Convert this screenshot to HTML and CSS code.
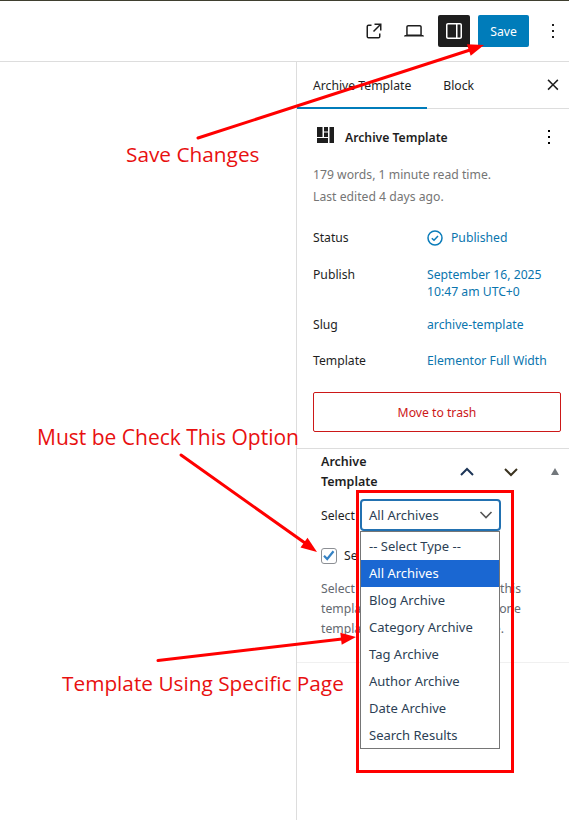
FILE: index.html
```html
<!DOCTYPE html>
<html lang="en">
<head>
    <meta charset="UTF-8">
    <title>Archive Template</title>
    <link rel="stylesheet" href="styles.css">
</head>
<body>
    <div class="page">
        <header class="topbar">
            <button class="icon-btn" aria-label="View">
                <svg width="24" height="24" viewBox="0 0 24 24"><path d="M19.500 4.500h-7V6h4.440l-5.970 5.970 1.060 1.060L18 7.060v4.440h1.500v-7Zm-13 1a2 2 0 0 0-2 2v10a2 2 0 0 0 2 2h10a2 2 0 0 0 2-2v-3H17v3a.5.5 0 0 1-.5.5h-10a.5.5 0 0 1-.5-.5v-10a.5.5 0 0 1 .5-.5h3V5.500h-3Z"/></svg>
            </button>
            <button class="icon-btn" aria-label="Preview">
                <svg width="24" height="24" viewBox="0 0 24 24"><path d="M20.500 16h-.7V8c0-1.100-.9-2-2-2H6.200c-1.100 0-2 .9-2 2v8h-.7c-.8 0-1.500.7-1.500 1.500h20c0-.8-.7-1.500-1.500-1.500ZM5.700 8c0-.3.2-.5.500-.5h11.600c.3 0 .5.2.5.5v7.600H5.700V8Z"/></svg>
            </button>
            <button class="icon-btn is-active" aria-label="Settings">
                <svg width="24" height="24" viewBox="0 0 24 24"><path fill="#fff" d="M18 4H6c-1.100 0-2 .9-2 2v12c0 1.100.9 2 2 2h12c1.100 0 2-.9 2-2V6c0-1.100-.9-2-2-2Zm-4 14.500H6c-.3 0-.5-.2-.5-.5V6c0-.3.2-.5.5-.5h8v13Zm4.500-.5c0 .3-.2.5-.5.5h-2.500v-13H18c.3 0 .5.2.5.5v12Z"/></svg>
            </button>
            <button class="save-btn">Save</button>
            <button class="icon-btn" aria-label="Options">
                <svg width="24" height="24" viewBox="0 0 24 24"><path d="M13 19h-2v-2h2v2Zm0-6h-2v-2h2v2Zm0-6h-2V5h2v2Z"/></svg>
            </button>
        </header>

        <div class="main">
            <div class="canvas"></div>
            <aside class="sidebar">
                <div class="tabs">
                    <span class="tab active">Archive Template</span>
                    <span class="tab">Block</span>
                    <svg class="tab-close" width="24" height="24" viewBox="0 0 24 24"><path d="m13 11.800 4.400-4.400-1.100-1.100-4.300 4.400-4.400-4.400-1.100 1.100 4.400 4.400-4.400 4.300 1.100 1.100 4.400-4.400 4.300 4.400 1.100-1.100z"/></svg>
                </div>

                <section class="summary">
                    <div class="summary-head">
                        <svg class="tpl-icon" width="17" height="16" viewBox="0 0 17 16"><path fill="#1e1e1e" d="M0 0h5.500v10H0zM7 0h4v4.500H7zM7 5.500h4V10H7zM0 11h11v5H0zM12.500 0H17v16h-4.500z"/></svg>
                        <h2>Archive Template</h2>
                        <svg class="dots" width="24" height="24" viewBox="0 0 24 24"><path d="M13 19h-2v-2h2v2Zm0-6h-2v-2h2v2Zm0-6h-2V5h2v2Z"/></svg>
                    </div>
                    <p class="meta">179 words, 1 minute read time.</p>
                    <p class="meta">Last edited 4 days ago.</p>

                    <div class="rows">
                        <div class="row row-status">
                            <span class="row-label">Status</span>
                            <span class="row-value status-value">
                                <svg width="16" height="16" viewBox="0 0 16 16"><circle cx="8" cy="8" r="7" fill="none" stroke="#0a7cba" stroke-width="1.500"/><path d="M4.800 8.200 7 10.300l4-4.300" fill="none" stroke="#0a7cba" stroke-width="1.500"/></svg>
                                Published
                            </span>
                        </div>
                        <div class="row row-publish">
                            <span class="row-label">Publish</span>
                            <span class="row-value">September 16, 2025<br>10:47 am UTC+0</span>
                        </div>
                        <div class="row row-slug">
                            <span class="row-label">Slug</span>
                            <span class="row-value">archive-template</span>
                        </div>
                        <div class="row row-template">
                            <span class="row-label">Template</span>
                            <span class="row-value">Elementor Full Width</span>
                        </div>
                    </div>
                    <button class="trash-btn">Move to trash</button>
                </section>

                <section class="metabox">
                    <div class="metabox-head">
                        <h3>Archive Template</h3>
                        <svg class="chev chev-up" width="16" height="10" viewBox="0 0 16 10"><path d="M2 8l6-6 6 6" fill="none" stroke="#1d3557" stroke-width="2"/></svg>
                        <svg class="chev chev-down" width="16" height="10" viewBox="0 0 16 10"><path d="M2 2l6 6 6-6" fill="none" stroke="#3b3320" stroke-width="2"/></svg>
                        <span class="tri"></span>
                    </div>
                    <div class="field">
                        <span class="field-label">Select</span>
                        <div class="select">
                            <span>All Archives</span>
                            <svg width="16" height="10" viewBox="0 0 16 10"><path d="M2.500 2 8 7.500 13.500 2" fill="none" stroke="#555" stroke-width="1.600"/></svg>
                        </div>
                    </div>
                    <label class="check-row">
                        <span class="checkbox"><svg width="16" height="16" viewBox="0 0 16 16"><path d="M3 7.800 6.200 11 12.500 3.300" fill="none" stroke="#3582c4" stroke-width="2.200"/></svg></span>
                        <span>Se</span>
                    </label>
                    <div class="help">
                        <p><span>Select</span><span>this</span></p>
                        <p><span>templa</span><span>one</span></p>
                        <p class="help-last"><span>templa</span><span>e.</span></p>
                    </div>
                </section>
            </aside>
        </div>

        <ul class="dropdown">
            <li>-- Select Type --</li>
            <li class="selected">All Archives</li>
            <li>Blog Archive</li>
            <li>Category Archive</li>
            <li>Tag Archive</li>
            <li>Author Archive</li>
            <li>Date Archive</li>
            <li>Search Results</li>
        </ul>

        <!-- annotations drawn on top of the screenshot -->
        <div class="red-box"></div>
        <svg class="arrows" width="569" height="820" viewBox="0 0 569 820">
            <g stroke="#f00" stroke-width="3" stroke-linecap="round" fill="none">
                <path d="M198 138 470 50"/>
                <path d="M181 455 305 543"/>
                <path d="M158 660.500 342 639"/>
            </g>
            <g fill="#f00">
                <path d="M484 45 470.700 55.700 466.900 44.300z"/>
                <path d="M317 552 300.500 547.600 307.500 537.800z"/>
                <path d="M356 637 341.700 644.800 340.300 632.800z"/>
            </g>
        </svg>
        <span class="note note-save">Save Changes</span>
        <span class="note note-check">Must be Check This Option</span>
        <span class="note note-page">Template Using Specific Page</span>
    </div>
</body>
</html>
```

FILE: styles.css
```css
* {
    box-sizing: border-box;
}
body {
    margin: 0;
    background: #fff;
    font-family: "Noto Sans", "Open Sans", sans-serif;
    font-size: 12.200px;
    color: #1e1e1e;
}
h2, h3, p, ul {
    margin: 0;
    padding: 0;
}
button {
    font-family: inherit;
    border: none;
    background: none;
    padding: 0;
    cursor: pointer;
}
.page {
    position: relative;
    width: 569px;
    height: 820px;
    overflow: hidden;
    border-top: 1px solid #3f3f2f;
}

/* top bar */
.topbar {
    display: flex;
    align-items: center;
    justify-content: flex-end;
    height: 61px;
    border-bottom: 1px solid #ddd;
    gap: 8px;
}
.icon-btn {
    display: flex;
    align-items: center;
    justify-content: center;
    width: 32px;
    height: 32px;
    border-radius: 2px;
}
.icon-btn svg {
    fill: #1e1e1e;
}
.icon-btn.is-active {
    background: #1e1e1e;
}
.save-btn {
    width: 51px;
    height: 32px;
    background: #007cba;
    color: #fff;
    font-size: 12.200px;
    border-radius: 2px;
}

.main {
    display: flex;
    height: 758px;
}
.canvas {
    width: 296px;
}
.sidebar {
    flex: 1;
    border-left: 1px solid #ddd;
}

/* tabs */
.tabs {
    display: flex;
    align-items: stretch;
    height: 47px;
    border-bottom: 1px solid #ddd;
    position: relative;
}
.tab {
    display: flex;
    align-items: center;
    padding: 0 16px;
    height: 47px;
    font-size: 12.200px;
}
.tab.active {
    box-shadow: inset 0 -2px 0 #007cba;
}
.tab-close {
    position: absolute;
    right: 4px;
    top: 11px;
    fill: #1e1e1e;
}

/* summary panel */
.summary {
    padding: 16px 8px 16px 16px;
    height: 340px;
    border-bottom: 1px solid #ddd;
}
.summary-head {
    display: flex;
    align-items: center;
    height: 24px;
    margin-bottom: 15px;
    padding-left: 4px;
}
.tpl-icon {
    margin-bottom: 4px;
}
.summary-head h2 {
    font-size: 12.200px;
    font-weight: 600;
    margin-left: 11px;
    flex: 1;
}
.meta {
    line-height: 22px;
    color: #757575;
}
.rows {
    margin-top: 21px;
}
.row {
    display: flex;
    line-height: 17px;
}
.row-publish {
    margin-top: 20px;
}
.row-slug {
    margin-top: 16px;
}
.row-template {
    margin-top: 19px;
}
.row-label {
    width: 114px;
}
.row-value {
    color: #0a75ae;
}
.status-value {
    display: flex;
    align-items: center;
    gap: 8px;
}
.trash-btn {
    display: block;
    width: 248px;
    height: 40px;
    margin-top: 23px;
    border: 1px solid #cc1818;
    border-radius: 2px;
    color: #cc1818;
    font-size: 12.200px;
}

/* meta box */
.metabox {
    padding: 3px 0 24px 24px;
    height: 214px;
    border-bottom: 1px solid #f0f0f0;
}
.metabox-head {
    display: flex;
    align-items: center;
    height: 40px;
    position: relative;
}
.metabox-head h3 {
    width: 80px;
    font-size: 12.500px;
    font-weight: 600;
    line-height: 20px;
}
.chev {
    position: absolute;
    top: 15px;
}
.chev-up {
    left: 138px;
}
.chev-down {
    left: 182px;
}
.tri {
    position: absolute;
    left: 230px;
    top: 16px;
    border: 4px solid transparent;
    border-top: 0;
    border-bottom: 7px solid #72777c;
}
.field {
    display: flex;
    align-items: center;
    margin-top: 7px;
    height: 32px;
}
.field-label {
    width: 39px;
}
.select {
    display: flex;
    align-items: center;
    justify-content: space-between;
    width: 141px;
    height: 32px;
    padding: 0 5px 0 7px;
    border: 2px solid #2271b1;
    border-radius: 4px;
    background: #fff;
    color: #2c3f55;
    font-size: 13px;
}
.check-row {
    display: flex;
    align-items: center;
    gap: 7px;
    margin-top: 16px;
    height: 17px;
}
.checkbox {
    display: block;
    width: 16px;
    height: 16px;
    border: 1px solid #8c8f94;
    border-radius: 3px;
}
.checkbox svg {
    display: block;
    margin: -1px;
}
.help {
    margin-top: 15px;
    width: 200px;
    line-height: 20px;
    color: #646970;
}
.help p {
    display: flex;
    justify-content: space-between;
}
.help .help-last {
    padding-right: 17px;
}

/* open select list */
.dropdown {
    position: absolute;
    left: 360px;
    top: 530px;
    width: 140px;
    height: 218px;
    padding-top: 1px;
    list-style: none;
    background: #fff;
    border: 1px solid #767676;
    color: #2c3f55;
    font-size: 13px;
}
.dropdown li {
    display: flex;
    align-items: center;
    height: 27px;
    padding: 0 0 2px 8px;
}
.dropdown li.selected {
    background: #1a67d2;
    color: #fff;
}

/* annotations */
.red-box {
    position: absolute;
    left: 356px;
    top: 489px;
    width: 158px;
    height: 283px;
    border: 3px solid #f00;
}
.arrows {
    position: absolute;
    left: 0;
    top: -1px;
}
.note {
    position: absolute;
    font-family: "Open Sans", sans-serif;
    font-size: 20.800px;
    line-height: 26px;
    color: #e81010;
    white-space: nowrap;
}
.note-save {
    left: 126px;
    top: 140px;
}
.note-check {
    left: 37px;
    top: 423px;
    font-size: 21px;
}
.note-page {
    left: 62px;
    top: 669px;
}
```
